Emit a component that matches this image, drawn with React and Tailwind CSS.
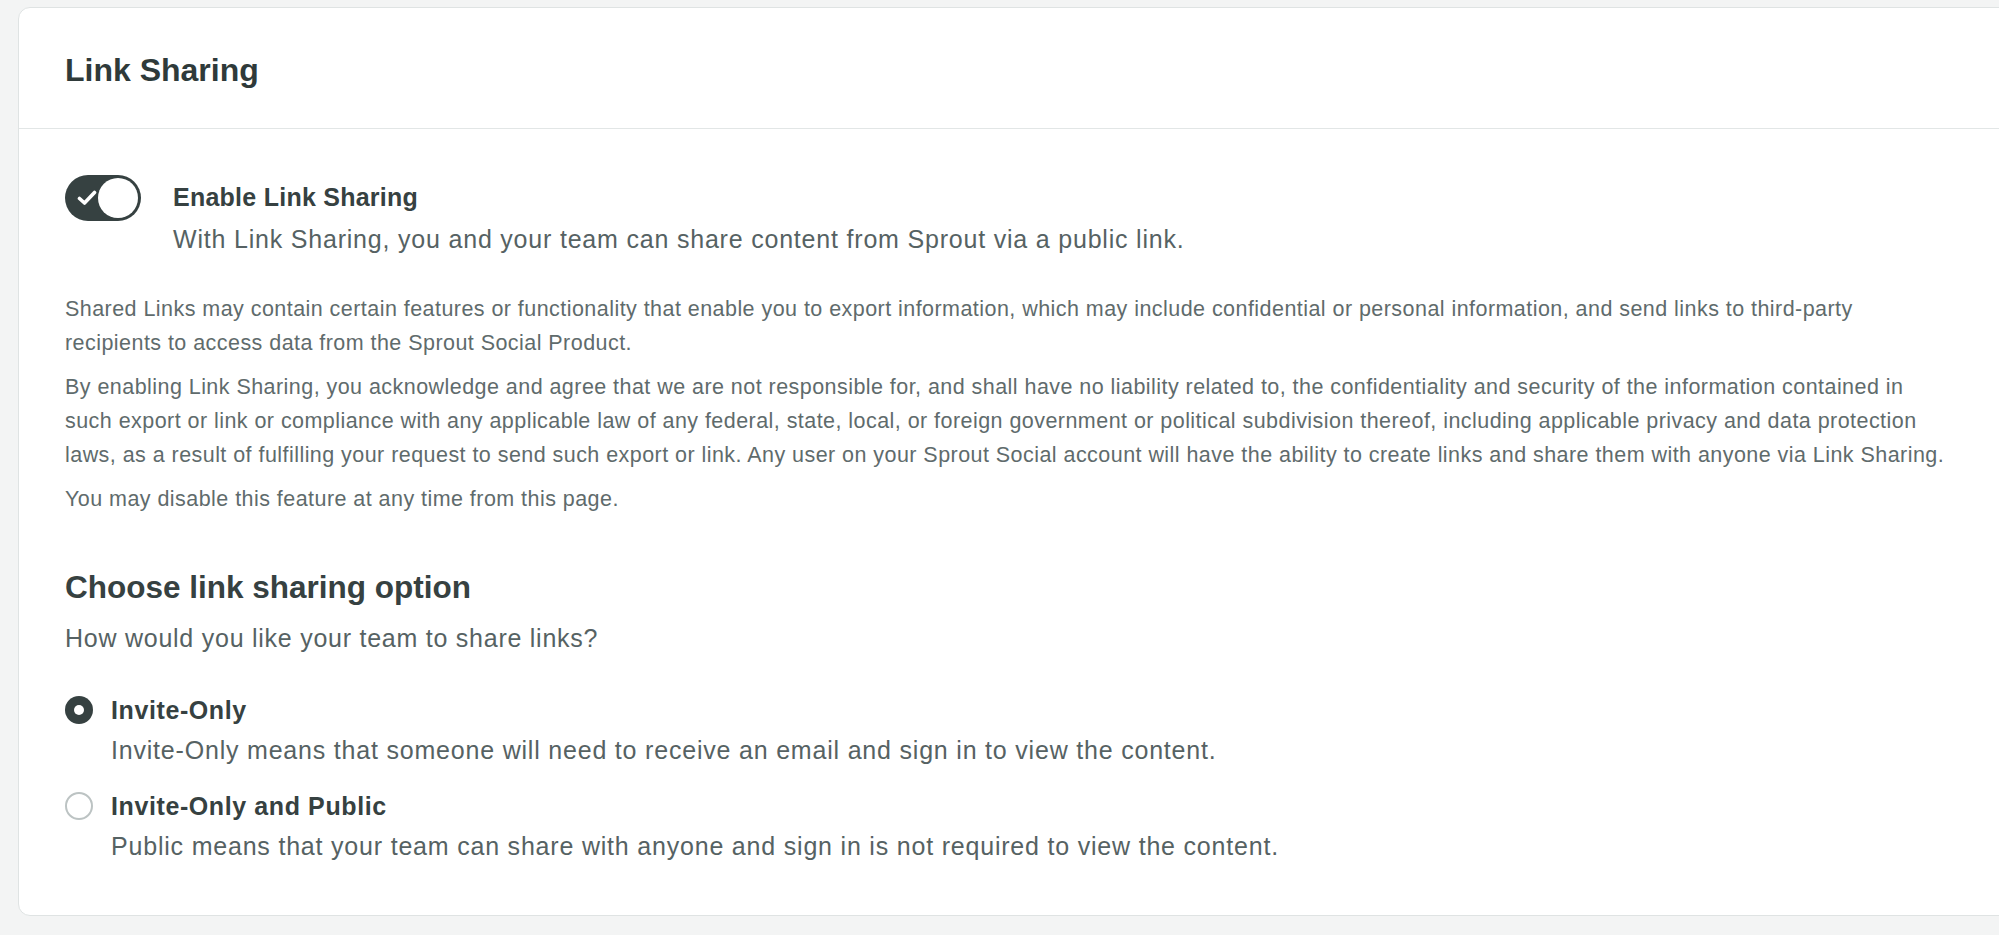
import React, { useState } from 'react';

const Toggle = ({ on, onChange }) => (
    <button
        type="button"
        onClick={() => onChange(!on)}
        className="relative shrink-0 w-[76px] h-[46px] rounded-full bg-[#364141]"
    >
        <svg className="absolute left-[12px] top-[14px] w-[20px] h-[18px]" viewBox="0 0 20 18" fill="none">
            <path d="M2.5 9.5 L7.5 14 L17.5 3.5" stroke="#ffffff" strokeWidth="3.6" strokeLinecap="round" strokeLinejoin="round" />
        </svg>
        <span className="absolute right-[3px] top-[3px] w-[40px] h-[40px] rounded-full bg-white" />
    </button>
);

const Radio = ({ checked }) => (
    checked ? (
        <span className="shrink-0 w-[28px] h-[28px] rounded-full bg-[#364141] flex items-center justify-center">
            <span className="w-[10px] h-[10px] rounded-full bg-white" />
        </span>
    ) : (
        <span className="shrink-0 w-[28px] h-[28px] rounded-full border-2 border-[#bcc3c3] bg-white" />
    )
);

const options = [
    { id: 'invite', label: 'Invite-Only', desc: 'Invite-Only means that someone will need to receive an email and sign in to view the content.' },
    { id: 'public', label: 'Invite-Only and Public', desc: 'Public means that your team can share with anyone and sign in is not required to view the content.' },
];

export default function App() {
    const [enabled, setEnabled] = useState(true);
    const [choice, setChoice] = useState('invite');

    return (
        <div className="min-h-[935px] w-full overflow-hidden bg-[#f3f4f4] pl-[18px] pt-[7px] pb-[20px]" style={{ fontFamily: '"Liberation Sans", Arial, sans-serif' }}>
            <div className="w-[2010px] bg-white border border-[#dfe3e3] rounded-[12px]">
                {/* header */}
                <div className="h-[121px] flex items-center px-[46px] pt-[3px] border-b border-[#e2e6e6]">
                    <h1 className="text-[32px] font-bold text-[#2f3a3a]">Link Sharing</h1>
                </div>

                <div className="px-[46px] pt-[46px] pb-[54px]">
                    {/* toggle row */}
                    <div className="flex items-start gap-[32px]">
                        <Toggle on={enabled} onChange={setEnabled} />
                        <div className="mt-[7px]">
                            <div className="text-[25px] leading-[30px] tracking-[0.25px] font-bold text-[#364141]">Enable Link Sharing</div>
                            <div className="mt-[12px] text-[25px] leading-[30px] tracking-[0.8px] text-[#566263]">
                                With Link Sharing, you and your team can share content from Sprout via a public link.
                            </div>
                        </div>
                    </div>

                    {/* disclaimer */}
                    <div className="mt-[38px] text-[21.5px] leading-[34px] tracking-[0.45px] text-[#5f6b6c] whitespace-nowrap">
                        <p>
                            Shared Links may contain certain features or functionality that enable you to export information, which may include confidential or personal information, and send links to third-party<br />
                            recipients to access data from the Sprout Social Product.
                        </p>
                        <p className="mt-[10px]">
                            By enabling Link Sharing, you acknowledge and agree that we are not responsible for, and shall have no liability related to, the confidentiality and security of the information contained in<br />
                            such export or link or compliance with any applicable law of any federal, state, local, or foreign government or political subdivision thereof, including applicable privacy and data protection<br />
                            laws, as a result of fulfilling your request to send such export or link. Any user on your Sprout Social account will have the ability to create links and share them with anyone via Link Sharing.
                        </p>
                        <p className="mt-[10px]">You may disable this feature at any time from this page.</p>
                    </div>

                    {/* options */}
                    <h2 className="mt-[51px] text-[31.5px] leading-[40px] font-bold text-[#364141]">Choose link sharing option</h2>
                    <p className="mt-[16px] text-[25px] leading-[30px] tracking-[0.75px] text-[#566263]">How would you like your team to share links?</p>

                    <div className="mt-[42px] flex flex-col gap-[26px]">
                        {options.map((opt) => (
                            <label key={opt.id} className="block cursor-pointer" onClick={() => setChoice(opt.id)}>
                                <div className="flex items-center gap-[18px]">
                                    <Radio checked={choice === opt.id} />
                                    <span className="text-[25px] leading-[30px] tracking-[0.6px] font-bold text-[#364141]">{opt.label}</span>
                                </div>
                                <div className="mt-[10px] pl-[46px] text-[25px] leading-[30px] tracking-[0.8px] text-[#566263]">{opt.desc}</div>
                            </label>
                        ))}
                    </div>
                </div>
            </div>
        </div>
    );
}
